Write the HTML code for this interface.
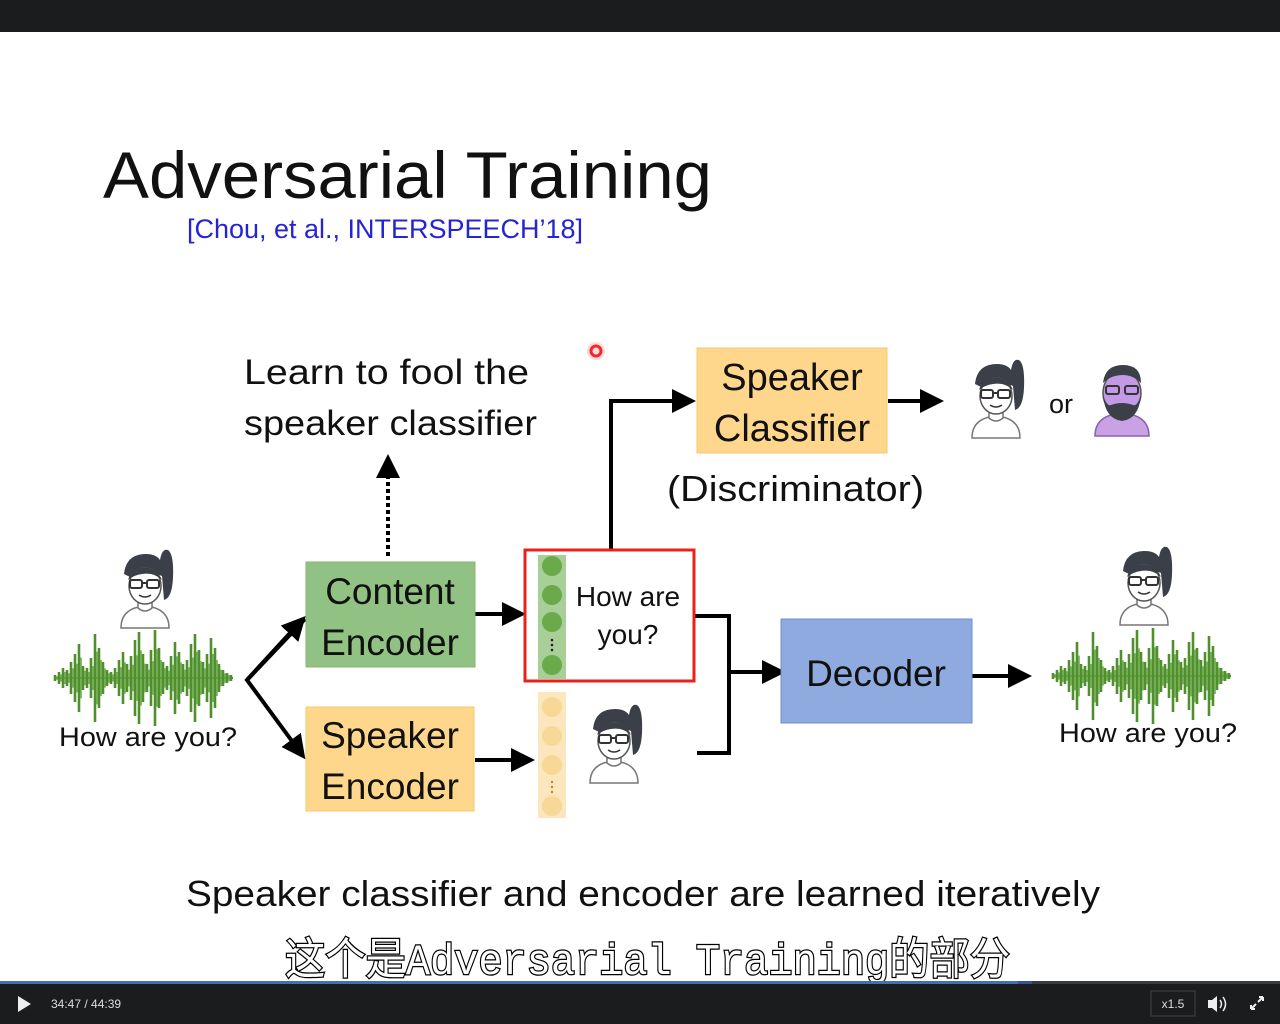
<!DOCTYPE html>
<html><head><meta charset="utf-8"><style>
html,body{margin:0;padding:0;width:1280px;height:1024px;overflow:hidden;background:#fff;font-family:"Liberation Sans",sans-serif}
svg{position:absolute;left:0;top:0}
</style></head><body>
<svg width="1280" height="1024" viewBox="0 0 1280 1024" xmlns="http://www.w3.org/2000/svg" font-family="Liberation Sans, sans-serif">
<defs>
<marker id="ah" markerWidth="6" markerHeight="6" refX="5" refY="3" orient="auto" markerUnits="strokeWidth"><path d="M0,0 L6,3 L0,6 Z" fill="#000"/></marker>
<g id="wave">
<path d="M0,0H178" stroke="#4d8a2a" stroke-width="2"/>
<path stroke="#4f8f2c" stroke-width="2.6" d="M0-3V3 M4-6V6 M8-10V10 M12-8V8 M16-16V16 M20-24V24 M24-34V34 M28-12V12 M32-10V10 M36-20V20 M40-44V44 M44-30V30 M48-16V16 M52-8V8 M56-6V6 M60-10V10 M64-18V18 M68-26V26 M72-14V14 M76-22V22 M80-38V38 M84-46V46 M88-24V24 M92-14V14 M96-28V28 M100-48V48 M104-30V30 M108-16V16 M112-12V12 M116-22V22 M120-36V36 M124-26V26 M128-14V14 M132-18V18 M136-34V34 M140-44V44 M144-28V28 M148-16V16 M152-24V24 M156-40V40 M160-30V30 M164-14V14 M168-8V8 M172-5V5 M176-3V3"/>
<path stroke="#6aa64a" stroke-width="1.5" transform="translate(2,0) scale(1,0.6)" d="M0-3V3 M4-6V6 M8-10V10 M12-8V8 M16-16V16 M20-24V24 M24-34V34 M28-12V12 M32-10V10 M36-20V20 M40-44V44 M44-30V30 M48-16V16 M52-8V8 M56-6V6 M60-10V10 M64-18V18 M68-26V26 M72-14V14 M76-22V22 M80-38V38 M84-46V46 M88-24V24 M92-14V14 M96-28V28 M100-48V48 M104-30V30 M108-16V16 M112-12V12 M116-22V22 M120-36V36 M124-26V26 M128-14V14 M132-18V18 M136-34V34 M140-44V44 M144-28V28 M148-16V16 M152-24V24 M156-40V40 M160-30V30 M164-14V14 M168-8V8 M172-5V5"/>
</g>
<g id="woman">
<path d="M6,26 Q8,6 28,6 Q38,6 42,12 Q44,0 50,2 Q56,6 55,30 Q54,50 46,52 L44,28 Q30,22 14,30 Z" fill="#3b4048"/>
<path d="M3,80 Q3,60 27,58 Q51,60 51,80 Z" fill="#fff" stroke="#777" stroke-width="1.5"/>
<path d="M20,52 L20,60 Q27,66 34,60 L34,52" fill="#fff" stroke="#777" stroke-width="1.5"/>
<ellipse cx="27" cy="38" rx="16" ry="18" fill="#fff" stroke="#555" stroke-width="1.5"/>
<path d="M10,32 Q14,18 30,20 Q40,22 44,32 Q36,24 24,26 Q16,27 10,32Z" fill="#3b4048"/>
<rect x="12" y="32" width="12" height="8" rx="2" fill="none" stroke="#333" stroke-width="2"/>
<rect x="29" y="32" width="12" height="8" rx="2" fill="none" stroke="#333" stroke-width="2"/>
<path d="M24,35H29" stroke="#333" stroke-width="2"/>
<path d="M21,47 Q27,51 33,47" fill="none" stroke="#333" stroke-width="1.5"/>
</g>
</defs>
<rect x="0" y="0" width="1280" height="32" fill="#1b1c1e"/>
<text x="103" y="198" font-size="66" fill="#111" textLength="609" lengthAdjust="spacingAndGlyphs">Adversarial Training</text>
<text x="187" y="238" font-size="27" fill="#2424d4" textLength="396" lengthAdjust="spacingAndGlyphs">[Chou, et al., INTERSPEECH’18]</text>
<circle cx="596" cy="351" r="5" fill="#fff" stroke="#e22" stroke-width="3"/>
<circle cx="596" cy="351" r="9" fill="#f44" opacity="0.2"/>
<text x="244" y="384" font-size="35" fill="#111" textLength="285" lengthAdjust="spacingAndGlyphs">Learn to fool the</text>
<text x="244" y="435" font-size="35" fill="#111" textLength="293" lengthAdjust="spacingAndGlyphs">speaker classifier</text>
<rect x="697" y="348" width="190" height="105" fill="#ffd78c" stroke="#f5c86e"/>
<text x="792" y="390" font-size="38" text-anchor="middle" fill="#111">Speaker</text>
<text x="792" y="441" font-size="38" text-anchor="middle" fill="#111">Classifier</text>
<text x="667" y="501" font-size="36" fill="#111" textLength="257" lengthAdjust="spacingAndGlyphs">(Discriminator)</text>
<text x="1049" y="413" font-size="27" fill="#111">or</text>
<use href="#woman" x="969" y="358"/>
<g transform="translate(1093,363)">
<path d="M2,73 Q2,52 29,50 Q56,52 56,73 Z" fill="#c9a2e6" stroke="#8a5fb0" stroke-width="1.5"/>
<ellipse cx="29" cy="30" rx="19" ry="22" fill="#c49ae6" stroke="#555" stroke-width="1.5"/>
<path d="M10,20 Q12,2 30,2 Q48,2 48,20 Q40,12 30,12 Q18,12 10,20Z" fill="#3b4048"/>
<path d="M10,32 Q12,56 29,58 Q46,56 48,32 Q44,44 40,42 Q29,38 18,42 Q14,44 10,32Z" fill="#3b4048"/>
<rect x="13" y="23" width="13" height="8" rx="2" fill="none" stroke="#333" stroke-width="2"/>
<rect x="32" y="23" width="13" height="8" rx="2" fill="none" stroke="#333" stroke-width="2"/>
</g>
<use href="#woman" x="118" y="548"/>
<use href="#wave" x="55" y="678"/>
<text x="59" y="746" font-size="27" fill="#111" textLength="178" lengthAdjust="spacingAndGlyphs">How are you?</text>
<use href="#woman" x="1117" y="545"/>
<use href="#wave" x="1053" y="676"/>
<text x="1059" y="742" font-size="27" fill="#111" textLength="178" lengthAdjust="spacingAndGlyphs">How are you?</text>
<use href="#woman" x="587" y="703"/>
<g stroke="#000" stroke-width="4" fill="none">
<path d="M303,619 L247,680 L303,756" marker-end="url(#ah)"/>
<path d="M305,619 L247,680" />
<line x1="247" y1="680" x2="303" y2="619" marker-end="url(#ah)"/>
<line x1="475" y1="614" x2="522" y2="614" marker-end="url(#ah)"/>
<line x1="475" y1="760" x2="531" y2="760" marker-end="url(#ah)"/>
<line x1="388" y1="556" x2="388" y2="458" stroke-dasharray="4 3" marker-end="url(#ah)"/>
<path d="M611,550 V401 H692" marker-end="url(#ah)"/>
<line x1="888" y1="401" x2="940" y2="401" marker-end="url(#ah)"/>
<path d="M695,616 H729 V753 H697"/>
<line x1="729" y1="672" x2="782" y2="672" marker-end="url(#ah)"/>
<line x1="972" y1="676" x2="1028" y2="676" marker-end="url(#ah)"/>
</g>
<rect x="306" y="562" width="169" height="105" fill="#92c283" stroke="#85b676"/>
<text x="390" y="604" font-size="37" text-anchor="middle" fill="#111">Content</text>
<text x="390" y="655" font-size="37" text-anchor="middle" fill="#111">Encoder</text>
<rect x="306" y="707" width="168" height="104" fill="#ffd78c" stroke="#f5c86e"/>
<text x="390" y="748" font-size="37" text-anchor="middle" fill="#111">Speaker</text>
<text x="390" y="799" font-size="37" text-anchor="middle" fill="#111">Encoder</text>
<rect x="781" y="619" width="191" height="104" fill="#8eaadf" stroke="#6f8fcc"/>
<text x="876" y="686" font-size="37" text-anchor="middle" fill="#111">Decoder</text>
<rect x="525" y="550" width="169" height="131" fill="#fff" stroke="#e8211a" stroke-width="3"/>
<rect x="538" y="555" width="28" height="124" fill="#a9cf98"/>
<g fill="#6aaa4a"><circle cx="552" cy="566" r="10"/><circle cx="552" cy="595" r="10"/><circle cx="552" cy="622" r="10"/><circle cx="552" cy="665" r="10"/></g>
<g fill="#222"><circle cx="552" cy="640" r="1.3"/><circle cx="552" cy="645" r="1.3"/><circle cx="552" cy="650" r="1.3"/></g>
<text x="628" y="606" font-size="28" text-anchor="middle" fill="#111">How are</text>
<text x="628" y="644" font-size="28" text-anchor="middle" fill="#111">you?</text>
<rect x="538" y="692" width="28" height="126" fill="#fbe6bd"/>
<g fill="#f7d896"><circle cx="552" cy="707" r="10"/><circle cx="552" cy="736" r="10"/><circle cx="552" cy="765" r="10"/><circle cx="552" cy="806" r="10"/></g>
<g fill="#b88a2a"><circle cx="552" cy="782" r="1.2"/><circle cx="552" cy="787" r="1.2"/><circle cx="552" cy="792" r="1.2"/></g>
<text x="186" y="906" font-size="36" fill="#111" textLength="914" lengthAdjust="spacingAndGlyphs">Speaker classifier and encoder are learned iteratively</text>
<text x="285" y="974" font-size="44" fill="#fff" stroke="#000" stroke-width="2.5" paint-order="stroke" font-family="Liberation Mono, Noto Sans CJK SC, sans-serif" textLength="725" lengthAdjust="spacingAndGlyphs">这个是Adversarial Training的部分</text>
<rect x="0" y="981" width="1280" height="3" fill="#3a3b3d"/>
<rect x="0" y="981" width="1018" height="3" fill="#3d72ae"/>
<rect x="1018" y="981" width="14" height="3" fill="#3450a0"/>
<rect x="0" y="984" width="1280" height="40" fill="#1b1c1e"/>
<path d="M18,996 L31,1004 L18,1012 Z" fill="#eee"/>
<text x="51" y="1008" font-size="12" fill="#ddd">34:47 / 44:39</text>
<rect x="1151" y="991" width="44" height="25" fill="none" stroke="#444"/>
<text x="1173" y="1008" font-size="12" fill="#ddd" text-anchor="middle">x1.5</text>
<path d="M1208,1000 H1212 L1217,996 V1012 L1212,1008 H1208 Z" fill="#eee"/>
<path d="M1220,1000 Q1223,1004 1220,1008 M1223,997 Q1228,1004 1223,1011" stroke="#eee" stroke-width="1.5" fill="none"/>
<path d="M1251,1009 L1256,1004 M1251,1009 V1005 M1251,1009 H1255 M1263,997 L1258,1002 M1263,997 V1001 M1263,997 H1259" stroke="#eee" stroke-width="2" fill="none"/>
</svg>
</body></html>
